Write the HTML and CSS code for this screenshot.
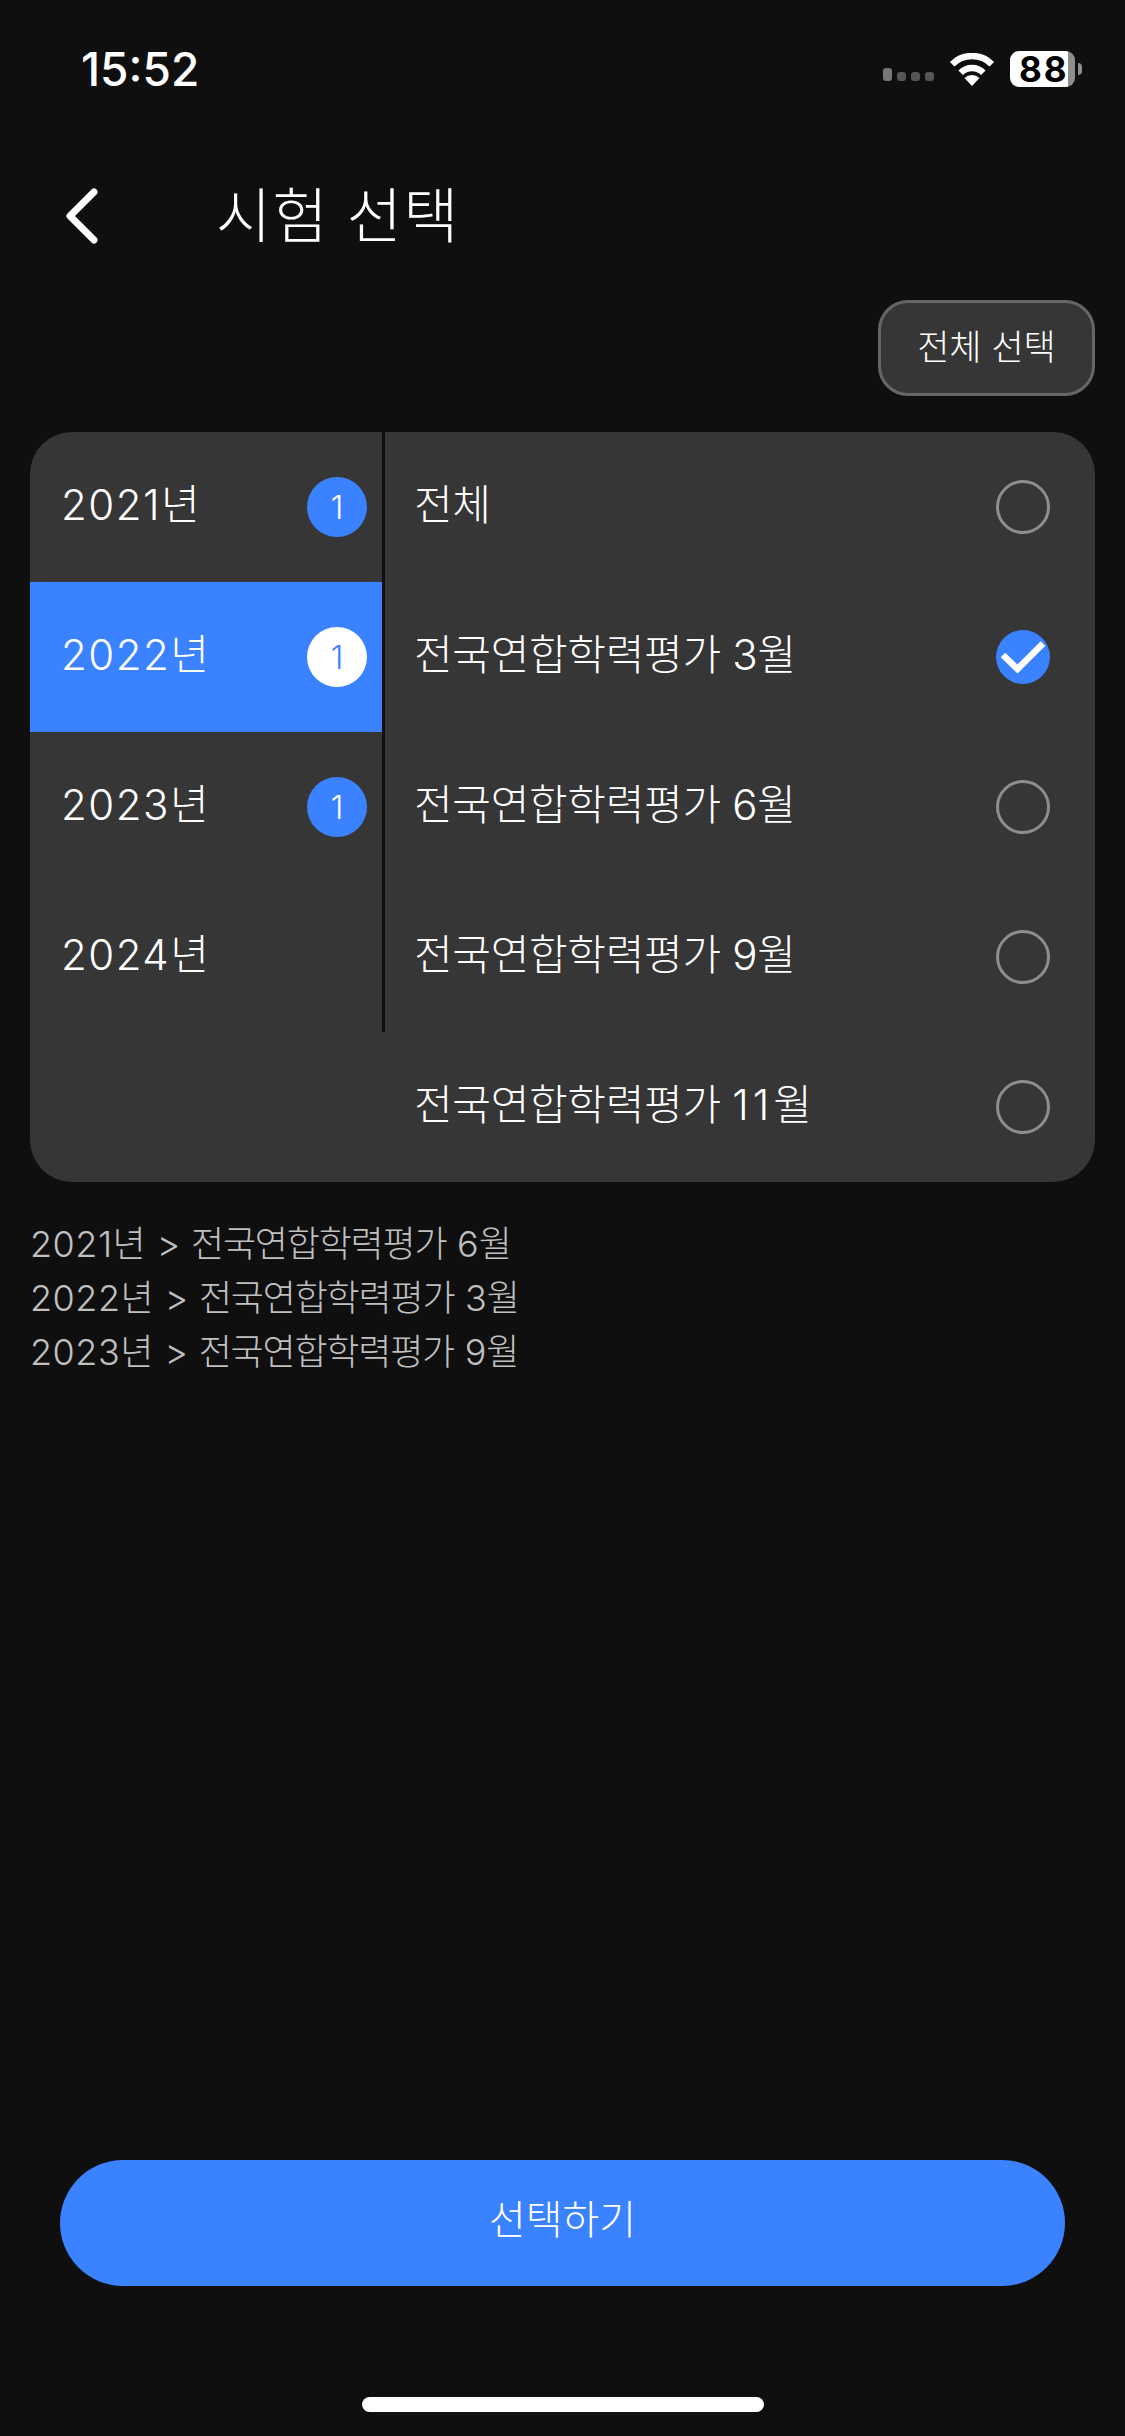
FILE: index.html
```html
<!DOCTYPE html>
<html lang="ko">
<head>
  <meta charset="UTF-8" />
  <meta name="viewport" content="width=device-width, initial-scale=1.0" />
  <title>시험 선택</title>
  <link rel="stylesheet" href="styles.css">
</head>
<body>
  <!-- STATUS BAR -->
  <div class="status-bar">
    <span class="time">15:52</span>
    <div class="status-icons">
      <div class="signal">
        <span class="dot dot-first"></span>
        <span class="dot"></span>
        <span class="dot"></span>
        <span class="dot"></span>
      </div>
      <svg class="wifi" width="46" height="33" viewBox="0 0 46 33">
        <path d="M3.2 11.2 A28 28 0 0 1 42.8 11.2" fill="none" stroke="#fff" stroke-width="6.5"/>
        <path d="M11.7 19.7 A16 16 0 0 1 34.3 19.7" fill="none" stroke="#fff" stroke-width="6.5"/>
        <path d="M23 33 L15.5 25 A11 11 0 0 1 30.5 25 Z" fill="#fff"/>
      </svg>
      <div class="battery">
        <div class="battery-body">88</div>
        <span class="battery-nub"></span>
      </div>
    </div>
  </div>

  <!-- HEADER -->
  <div class="header">
    <svg class="back" width="34" height="58" viewBox="0 0 34 58">
      <path d="M29 5 L5 29 L29 53" fill="none" stroke="#fff" stroke-width="7" stroke-linecap="round" stroke-linejoin="round"/>
    </svg>
    <h1 class="title">시험 선택</h1>
  </div>

  <div class="actions">
    <button class="select-all">전체 선택</button>
  </div>

  <!-- PICKER -->
  <div class="picker">
    <div class="years">
      <div class="year"><span class="year-label">2021년</span><span class="badge">1</span></div>
      <div class="year year-active"><span class="year-label">2022년</span><span class="badge">1</span></div>
      <div class="year"><span class="year-label">2023년</span><span class="badge">1</span></div>
      <div class="year"><span class="year-label">2024년</span></div>
    </div>
    <div class="exams">
      <div class="exam"><span class="exam-label">전체</span><span class="radio"></span></div>
      <div class="exam">
        <span class="exam-label">전국연합학력평가 3월</span>
        <svg class="radio-on" width="54" height="54" viewBox="0 0 54 54">
          <circle cx="27" cy="27" r="27" fill="#3a82ff"/>
          <path d="M7 25 L21.5 39 L47 13.5" fill="none" stroke="#fff" stroke-width="6.5"/>
        </svg>
      </div>
      <div class="exam"><span class="exam-label">전국연합학력평가 6월</span><span class="radio"></span></div>
      <div class="exam"><span class="exam-label">전국연합학력평가 9월</span><span class="radio"></span></div>
      <div class="exam"><span class="exam-label">전국연합학력평가 <span class="wide">11</span>월</span><span class="radio"></span></div>
    </div>
  </div>

  <div class="summary">
    <p><span class="sum-year">2021년</span> &gt; <span class="sum-exam">전국연합학력평가</span> 6월</p>
    <p><span class="sum-year">2022년</span> &gt; <span class="sum-exam">전국연합학력평가</span> 3월</p>
    <p><span class="sum-year">2023년</span> &gt; <span class="sum-exam">전국연합학력평가</span> 9월</p>
  </div>

  <button class="submit">선택하기</button>
  <div class="home-bar"></div>
</body>
</html>
```

FILE: styles.css
```css
* {
  box-sizing: border-box;
}
body {
  font-family: Inter, 'Noto Sans CJK KR', sans-serif;
  font-weight: 300;
  background: #0f0f10;
  color: #fff;
  margin: 0;
  width: 1125px;
  height: 2436px;
  display: flex;
  flex-direction: column;
  overflow: hidden;
}

/* status bar */
.status-bar {
  height: 92px;
  padding: 44px 43px 0 81px;
  display: flex;
  justify-content: space-between;
  align-items: flex-start;
}
.time {
  font-size: 46px;
  font-weight: 500;
  line-height: 50px;
}
.status-icons {
  display: flex;
  align-items: center;
  margin-top: 7px;
}
.signal {
  display: flex;
  align-items: flex-end;
  gap: 5px;
  margin-top: 10px;
}
.dot {
  width: 9px;
  height: 9px;
  border-radius: 3px;
  background: #555;
}
.dot-first {
  height: 13px;
  background: #777;
}
.wifi {
  margin-left: 15px;
}
.battery {
  display: flex;
  align-items: center;
  margin-left: 15px;
}
.battery-body {
  width: 65px;
  height: 36px;
  border-radius: 9px;
  background: linear-gradient(to right, #fff 89%, #8e8e8e 89%);
  color: #000;
  font-size: 35px;
  font-weight: 700;
  line-height: 36px;
  padding-left: 9px;
  letter-spacing: 2px;
}
.battery-nub {
  width: 4px;
  height: 12px;
  margin-left: 3px;
  border-radius: 0 6px 6px 0;
  background: #8e8e8e;
}

/* header */
.header {
  height: 120px;
  margin-top: 64px;
  padding-left: 65px;
  display: flex;
  align-items: center;
}
.title {
  margin: 0 0 0 117px;
  font-size: 60px;
  font-weight: 300;
  line-height: 80px;
  letter-spacing: 1.2px;
}
.actions {
  display: flex;
  justify-content: flex-end;
  margin-top: 24px;
  padding-right: 30px;
}
.select-all {
  width: 217px;
  height: 96px;
  font-family: inherit;
  font-weight: 300;
  font-size: 35px;
  color: #fff;
  background: #363636;
  border: 3px solid #666;
  border-radius: 30px;
  padding: 0 0 8px;
}

/* picker */
.picker {
  display: flex;
  align-items: flex-start;
  margin: 36px 30px 0;
  height: 750px;
  background: #363636;
  border-radius: 42px;
  overflow: hidden;
}
.years {
  width: 355px;
  height: 600px;
  border-right: 3px solid #111;
}
.year {
  height: 150px;
  display: flex;
  align-items: center;
  justify-content: space-between;
  padding: 0 15px 0 31px;
}
.year-active {
  background: #3a82ff;
}
.year-label,
.exam-label {
  font-size: 42px;
  margin-bottom: 12px;
}
.year-label {
  letter-spacing: 1.5px;
}
.exam-label {
  letter-spacing: -0.3px;
}
.wide {
  letter-spacing: 4px;
}
.badge {
  width: 60px;
  height: 60px;
  border-radius: 50%;
  background: #3a82ff;
  font-size: 32px;
  display: flex;
  align-items: center;
  justify-content: center;
}
.year-active .badge {
  background: #fff;
  color: #3a82ff;
}
.exams {
  flex: 1;
}
.exam {
  height: 150px;
  display: flex;
  align-items: center;
  justify-content: space-between;
  padding: 0 45px 0 29px;
}
.radio {
  width: 54px;
  height: 54px;
  border: 3px solid #8e8e8e;
  border-radius: 50%;
}

/* summary */
.summary {
  margin-top: 35px;
  padding-left: 30px;
  color: #c0c0c0;
  font-size: 36px;
  line-height: 54px;
  word-spacing: 0.5px;
}
.summary p {
  margin: 0;
}
.sum-year {
  letter-spacing: 0.5px;
}
.sum-exam {
  letter-spacing: -1.2px;
}

/* bottom */
.submit {
  margin: auto 60px 0;
  height: 126px;
  background: #3a82ff;
  border: none;
  border-radius: 63px;
  color: #fff;
  font-family: inherit;
  font-weight: 300;
  font-size: 40px;
  padding: 0 0 13px;
}
.home-bar {
  width: 402px;
  height: 15px;
  margin: 111px auto 24px;
  border-radius: 8px;
  background: #fff;
}
```
